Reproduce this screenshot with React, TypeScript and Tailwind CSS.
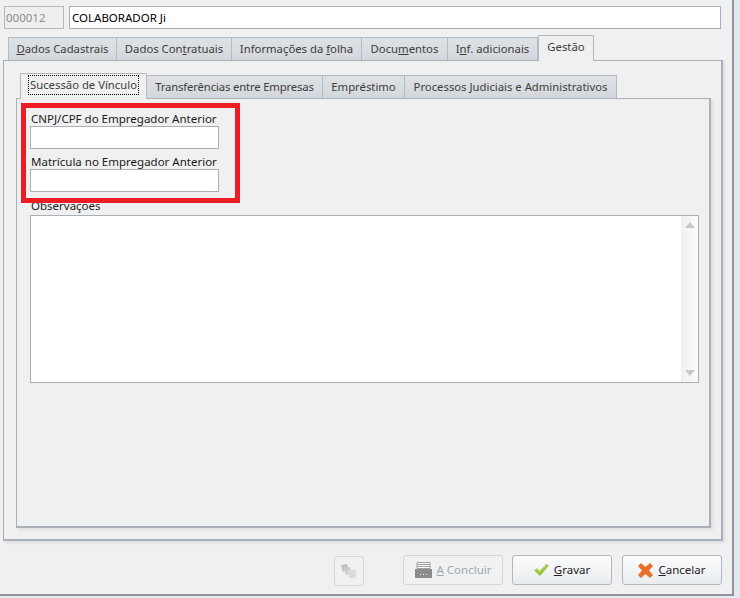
const font = "font-['Noto_Sans',sans-serif]";

type TabDef = { w: string; label: React.ReactNode };

const outerTabs: TabDef[] = [
  { w: 'w-[108px]', label: <><u>D</u>ados Cadastrais</> },
  { w: 'w-[115px]', label: <>Dados Con<u>t</u>ratuais</> },
  { w: 'w-[130px]', label: <>Informações da <u>f</u>olha</> },
  { w: 'w-[86px]', label: <>Docu<u>m</u>entos</> },
  { w: 'w-[90px]', label: <>I<u>n</u>f. adicionais</> },
];

const innerTabs: TabDef[] = [
  { w: 'w-[176px]', label: <span className="tracking-[-0.15px]">Transferências entre Empresas</span> },
  { w: 'w-[82px]', label: 'Empréstimo' },
  { w: 'w-[212px]', label: 'Processos Judiciais e Administrativos' },
];

function Tab({ w, label, h }: TabDef & { h: string }) {
  return (
    <div className={`${w} ${h} flex items-center justify-center border-t border-r border-[#b4bac2] bg-[linear-gradient(#dfe2e5,#d3d7db)] text-[11.3px] text-[#3c3c3c] whitespace-nowrap`}>
      <span>{label}</span>
    </div>
  );
}

function Field({ label, className }: { label: string; className: string }) {
  return (
    <div className={className}>
      <div className="h-[18px] pl-[1px] leading-[22px] text-[#1a1a1a]">{label}</div>
      <div className="relative h-[23px] w-[189px] border border-[#a9b0b8] bg-white" />
    </div>
  );
}

function Btn({ w, disabled, children }: { w: string; disabled?: boolean; children: React.ReactNode }) {
  return (
    <div className={`${w} flex h-[30px] items-center justify-center gap-[5px] rounded-[3px] border ${disabled ? 'border-[#d3d7dc] bg-[#eff1f3] text-[#a2a7ac]' : 'border-[#b4b8bd] bg-[linear-gradient(#fbfcfd,#e9ecef)] text-[#222]'}`}>
      {children}
    </div>
  );
}

export default function App() {
  return (
    <div className={`${font} h-[598px] w-[740px] overflow-hidden bg-[#e4eaef] text-[11.5px]`}>
      <div className="relative h-[596px] w-[734px] border-r-2 border-b-2 border-[#8e959c] bg-[#f0f0f0]">
        {/* cabecalho */}
        <div className="flex gap-[5px] pt-[6px] pl-[4px]">
          <div className="flex h-[23px] w-[60px] items-center border border-[#b4bac2] bg-[#efefef] pl-[1px] text-[#8d8d8d]">000012</div>
          <div className="flex h-[23px] w-[652px] items-center border border-[#a9b0b8] bg-white pl-[2px] text-black">COLABORADOR Ji</div>
        </div>

        {/* abas principais */}
        <div className="mt-[6px] flex h-[25px] items-end pl-[8px]">
          <div className="flex border-l border-[#b4bac2]">
            {outerTabs.map((t, i) => (
              <Tab key={i} {...t} h="h-[23px]" />
            ))}
          </div>
          <div className="relative z-10 -mb-[1px] flex h-[26px] w-[56px] items-center justify-center border-x border-t border-[#b4bac2] bg-[#f0f0f0] pb-[3px] text-[11.3px] text-[#3c3c3c]">Gestão</div>
        </div>

        <div className="ml-[3px] h-[481px] w-[720px] border border-r-2 border-b-2 border-[#a9b0b8] bg-[#f0f0f0] pt-[12px] pl-[12px] shadow-[2px_2px_3px_rgba(0,0,0,0.08)]">
          {/* abas internas */}
          <div className="flex h-[25px] items-end pl-[4px]">
            <div className="relative z-10 -mb-[1px] flex h-[26px] w-[127px] items-center justify-center border-x border-t border-[#b4bac2] bg-[#f0f0f0] pb-[3px] text-[11.3px] text-[#3c3c3c]">
              <span className="border border-dotted border-black px-[1px] leading-[18px]">Sucessão de Vínculo</span>
            </div>
            {innerTabs.map((t, i) => (
              <Tab key={i} {...t} h="h-[23px]" />
            ))}
          </div>

          <div className="h-[430px] w-[695px] border border-r-2 border-b-2 border-[#a9b0b8] pt-[9px] pl-[13px] shadow-[2px_2px_3px_rgba(0,0,0,0.08)]">
            <Field label="CNPJ/CPF do Empregador Anterior" className="" />
            <Field label="Matrícula no Empregador Anterior" className="mt-[2px]" />
            <div className="mt-[3px] h-[20px] pl-[1px] leading-[22px] text-[#1a1a1a]">Observações</div>
            <div className="relative flex h-[168px] w-[669px] justify-end border border-[#a9b0b8] bg-white">
              <div className="flex w-[17px] flex-col items-center justify-between bg-[linear-gradient(90deg,#f0f0f0,#fbfbfb)] py-[6px]">
                <div className="h-0 w-0 border-x-[5px] border-b-[6px] border-x-transparent border-b-[#c8c8c8]" />
                <div className="h-0 w-0 border-x-[5px] border-t-[6px] border-x-transparent border-t-[#c8c8c8]" />
              </div>
            </div>
          </div>
        </div>

        {/* destaque vermelho */}
        <div className="absolute top-[103px] left-[21px] h-[100px] w-[219px] border-[5px] border-[#ed1c24]" />

        {/* botoes */}
        <div className="mt-[14px] flex items-start pl-[334px]">
          <div className="mt-[1px] flex h-[30px] w-[30px] items-center justify-center rounded-[3px] border border-[#d3d7dc] bg-[#eff1f3]">
            <svg width="18" height="18" viewBox="0 0 18 18">
              <path d="M1 3l6-1 2 6-6 2z" fill="#c0c0c0" />
              <path d="M4 6l6-1 2 6-6 2z" fill="#cdcdcd" />
              <path d="M8 8h8v8H9z" fill="#dcdcdc" />
            </svg>
          </div>
          <div className="ml-[39px] flex">
            <Btn w="w-[100px]" disabled>
              <svg width="17" height="16" viewBox="0 0 17 16">
                <path d="M2 .5h13v6H2z" fill="#fff" stroke="#a0a0a0" />
                <path d="M2 2.500h13M2 4.500h13" stroke="#a0a0a0" />
                <path d="M0 7h17v9H0z" fill="#8c8c8c" />
                <path d="M5 12h1v1H5zM8 12h1v1H8zM11 12h1v1h-1z" fill="#f0f0f0" />
              </svg>
              <span><u>A</u> Concluir</span>
            </Btn>
            <div className="ml-[9px]">
              <Btn w="w-[100px]">
                <svg width="15" height="12" viewBox="0 0 16 13">
                  <path d="M0 7l3-2.500 3 3L13 0l3 1.500L6.500 13z" fill="#9ac43c" />
                  <path d="M1 7l2-1.500 3 3L13.500 1" fill="none" stroke="#c7e07a" />
                </svg>
                <span><u>G</u>ravar</span>
              </Btn>
            </div>
            <div className="ml-[10px]">
              <Btn w="w-[100px]">
                <svg width="15" height="15" viewBox="0 0 15 15">
                  <path d="M0 3l3-3 4.500 4L12 0l3 3-4 4.500 4 4.500-3 3-4.500-4L3 15l-3-3 4-4.500z" fill="#e8702a" />
                </svg>
                <span><u>C</u>ancelar</span>
              </Btn>
            </div>
          </div>
        </div>
      </div>
    </div>
  );
}
